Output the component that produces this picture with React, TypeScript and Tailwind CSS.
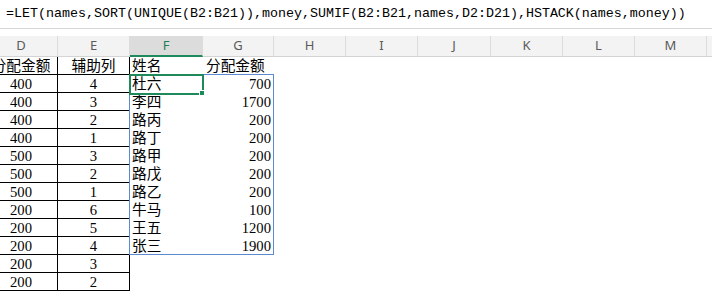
import React from "react";

const cols = ["D", "E", "F", "G", "H", "I", "J", "K", "L", "M", ""];
const widths = ["w-[73px]", "w-[72px]", "w-[73px]", "w-[71px]", "w-[72px]", "w-[72px]", "w-[73px]", "w-[72px]", "w-[72px]", "w-[72px]", "w-[72px]"];

const helper: [string, string][] = [
  ["分配金额", "辅助列"],
  ["400", "4"],
  ["400", "3"],
  ["400", "2"],
  ["400", "1"],
  ["500", "3"],
  ["500", "2"],
  ["500", "1"],
  ["200", "6"],
  ["200", "5"],
  ["200", "4"],
  ["200", "3"],
  ["200", "2"],
];

const result: [string, string][] = [
  ["姓名", "分配金额"],
  ["杜六", "700"],
  ["李四", "1700"],
  ["路丙", "200"],
  ["路丁", "200"],
  ["路甲", "200"],
  ["路戊", "200"],
  ["路乙", "200"],
  ["牛马", "100"],
  ["王五", "1200"],
  ["张三", "1900"],
];

const cellFont = { fontFamily: '"Liberation Serif", "Noto Sans CJK SC", serif' };

export default function App() {
  return (
    <div className="w-[712px] h-[291px] overflow-hidden bg-white text-black">
      {/* formula bar */}
      <div
        className="h-[29px] border-b border-[#d6d6d6] flex items-center pl-[6px] text-[13.33px] whitespace-nowrap"
        style={{ fontFamily: '"Liberation Mono", monospace' }}
      >
        =LET(names,SORT(UNIQUE(B2:B21)),money,SUMIF(B2:B21,names,D2:D21),HSTACK(names,money))
      </div>
      <div className="h-[7px]" />

      <div className="relative -ml-[15px]">
        {/* column headers */}
        <div className="flex h-[21px] bg-[#f3f3f3] border-b border-[#d4d4d4]">
          {cols.map((c, i) => (
            <div
              key={i}
              className={`${widths[i]} shrink-0 flex items-center justify-center border-r border-[#dcdcdc] text-[13px] ${
                c === "F" ? "bg-[#dcdcdc] text-[#1e7f55] border-b-2 border-b-[#1e8a5c] -mb-[1px]" : "text-[#5a5a5a]"
              }`}
              style={{ fontFamily: '"Noto Sans", sans-serif' }}
            >
              {c}
            </div>
          ))}
        </div>

        {/* sheet rows */}
        {helper.map((h, r) => {
          const res = result[r];
          return (
            <div key={r} className="flex h-[18px] text-[14.67px] leading-none" style={cellFont}>
              <div className={`${widths[0]} shrink-0 border-r border-b border-black flex items-center justify-center pt-[1px] overflow-visible whitespace-nowrap`}>
                {h[0]}
              </div>
              <div className={`${widths[1]} shrink-0 border-r border-b border-black flex items-center justify-center pt-[1px]`}>
                {h[1]}
              </div>
              <div className={`${widths[2]} shrink-0 flex items-center pl-[2px] pt-[1px]`}>{res ? res[0] : ""}</div>
              <div
                className={`${widths[3]} shrink-0 flex items-center pt-[1px] ${
                  r === 0 ? "pl-[3px]" : "justify-end pr-[3px]"
                }`}
              >
                {res ? res[1] : ""}
              </div>
            </div>
          );
        })}

        {/* spill range outline */}
        <div className="absolute left-[144px] top-[38px] w-[145px] h-[181px] border border-[#5b8ad2] pointer-events-none" />
        {/* active cell */}
        <div className="absolute left-[144px] top-[38px] w-[75px] h-[21px] border-2 border-solid border-[#1e8a5c] pointer-events-none" />
        <div className="absolute left-[214px] top-[54px] w-[6px] h-[6px] bg-[#1e8a5c] border border-white pointer-events-none" />
      </div>
    </div>
  );
}
